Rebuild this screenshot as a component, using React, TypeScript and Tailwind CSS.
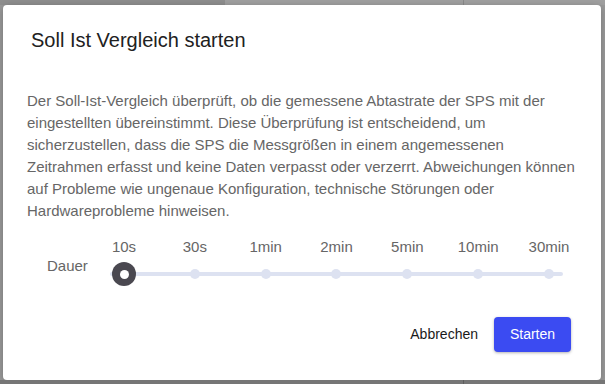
export default function App() {
  const ticks = ["10s", "30s", "1min", "2min", "5min", "10min", "30min"];
  return (
    <div
      className="w-[605px] h-[384px] overflow-hidden bg-[#9e9e9e] flex flex-col"
      style={{ fontFamily: '"Liberation Sans", Arial, sans-serif' }}
    >
      <div className="h-[5px] flex shrink-0">
        <div className="w-[225px] bg-[#8f8f8f]" />
        <div className="w-[238px] bg-[#a0a0a0]" />
        <div className="w-[1px] bg-[#8a8a8a]" />
        <div className="flex-1 bg-[#a0a0a0]" />
      </div>
      <div className="flex h-[375px] shrink-0 pl-[3px] pr-[4px] bg-[#9a9a9a]">
        <div className="w-[598px] h-[375px] bg-white rounded-[4px] shadow-[0_2px_8px_rgba(0,0,0,0.25)] flex flex-col">
          <h1 className="pl-[28px] pt-[21px] text-[20px] leading-[28px] text-[#212121] font-normal">
            Soll Ist Vergleich starten
          </h1>
          <p className="mt-[36px] pl-[24px] w-[577px] text-[15px] leading-[22px] text-[#666666]">
            Der Soll-Ist-Vergleich überprüft, ob die gemessene Abtastrate der SPS mit der eingestellten übereinstimmt. Diese Überprüfung ist entscheidend, um sicherzustellen, dass die SPS die Messgrößen in einem angemessenen Zeitrahmen erfasst und keine Daten verpasst oder verzerrt. Abweichungen können auf Probleme wie ungenaue Konfiguration, technische Störungen oder Hardwareprobleme hinweisen.
          </p>
          <div className="mt-[16px] flex items-start">
            <div className="w-[107px] pl-[44px] pt-[19px] text-[15px] leading-[18px] text-[#666666]">Dauer</div>
            <div className="w-[453px] px-[14px] flex flex-col">
              <div className="flex justify-between h-[18px]">
                {ticks.map((t) => (
                  <div key={t} className="w-0 flex justify-center">
                    <span className="whitespace-nowrap text-[15px] leading-[18px] text-[#666666]">{t}</span>
                  </div>
                ))}
              </div>
              <div className="relative mt-[9px] h-[18px] -mx-[14px] flex items-center">
                <div className="h-[4px] w-full bg-[#dde2f1] rounded-full" />
                <div className="absolute inset-x-[14px] top-0 h-[18px] flex justify-between items-center">
                  {ticks.map((t, i) => (
                    <div key={t} className="w-0 flex justify-center items-center">
                      {i === 0 ? (
                        <div className="shrink-0 w-[24px] h-[24px] rounded-full bg-[#4a4850] flex items-center justify-center">
                          <div className="w-[9px] h-[9px] rounded-full bg-white" />
                        </div>
                      ) : (
                        <div className="shrink-0 w-[10px] h-[10px] rounded-full bg-[#dde2f1]" />
                      )}
                    </div>
                  ))}
                </div>
              </div>
            </div>
          </div>
          <div className="mt-auto mb-[28px] pr-[30px] flex justify-end items-center gap-[16px]">
            <button className="text-[14px] text-[#1a1a1a] px-[0px]">Abbrechen</button>
            <button className="w-[77px] h-[35px] rounded-[4px] bg-[#3b4bf2] text-white text-[14px] shadow-[0_1px_3px_rgba(0,0,0,0.3)]">
              Starten
            </button>
          </div>
        </div>
      </div>
      <div className="flex-1 flex bg-[#767676]">
        <div className="w-[463px]" />
        <div className="w-[1px] bg-[#5e5e5e]" />
      </div>
    </div>
  );
}
